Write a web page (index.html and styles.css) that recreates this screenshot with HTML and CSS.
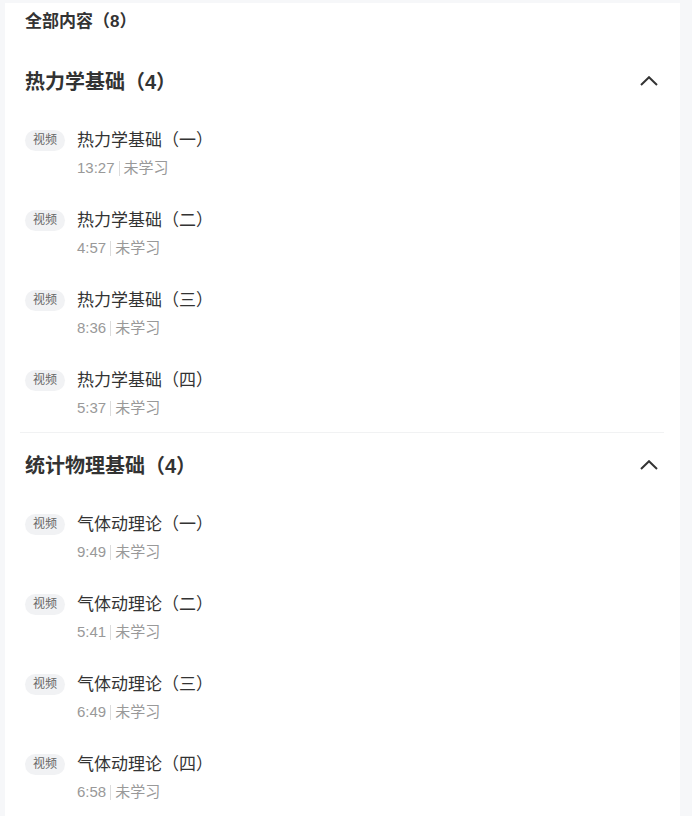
FILE: index.html
```html
<!DOCTYPE html>
<html lang="zh">
<head>
<meta charset="utf-8">
<link rel="stylesheet" href="styles.css">
</head>
<body>
<div class="card">
  <div class="all-header">全部内容（8）</div>

  <section class="section">
    <div class="sec-header">
      <span class="sec-title">热力学基础（4）</span>
      <svg class="chev" width="18" height="10" viewBox="0 0 18 10"><polyline points="1,9 9,1.2 17,9" fill="none" stroke="#333" stroke-width="2"/></svg>
    </div>
    <div class="item"><span class="tag">视频</span><div class="info"><div class="title">热力学基础（一）</div><div class="meta"><span>13:27</span><i class="sep"></i><span>未学习</span></div></div></div>
    <div class="item"><span class="tag">视频</span><div class="info"><div class="title">热力学基础（二）</div><div class="meta"><span>4:57</span><i class="sep"></i><span>未学习</span></div></div></div>
    <div class="item"><span class="tag">视频</span><div class="info"><div class="title">热力学基础（三）</div><div class="meta"><span>8:36</span><i class="sep"></i><span>未学习</span></div></div></div>
    <div class="item"><span class="tag">视频</span><div class="info"><div class="title">热力学基础（四）</div><div class="meta"><span>5:37</span><i class="sep"></i><span>未学习</span></div></div></div>
  </section>

  <section class="section divided">
    <div class="sec-header">
      <span class="sec-title">统计物理基础（4）</span>
      <svg class="chev" width="18" height="10" viewBox="0 0 18 10"><polyline points="1,9 9,1.2 17,9" fill="none" stroke="#333" stroke-width="2"/></svg>
    </div>
    <div class="item"><span class="tag">视频</span><div class="info"><div class="title">气体动理论（一）</div><div class="meta"><span>9:49</span><i class="sep"></i><span>未学习</span></div></div></div>
    <div class="item"><span class="tag">视频</span><div class="info"><div class="title">气体动理论（二）</div><div class="meta"><span>5:41</span><i class="sep"></i><span>未学习</span></div></div></div>
    <div class="item"><span class="tag">视频</span><div class="info"><div class="title">气体动理论（三）</div><div class="meta"><span>6:49</span><i class="sep"></i><span>未学习</span></div></div></div>
    <div class="item"><span class="tag">视频</span><div class="info"><div class="title">气体动理论（四）</div><div class="meta"><span>6:58</span><i class="sep"></i><span>未学习</span></div></div></div>
  </section>
</div>
</body>
</html>
```

FILE: styles.css
```css
html, body {
  margin: 0;
  padding: 0;
  background: #f6f7f9;
  font-family: "Liberation Sans", "Noto Sans CJK SC", sans-serif;
  color: #333;
}
.card {
  margin: 3px 0 0 5px;
  width: 675px;
  min-height: 813px;
  background: #fff;
  box-sizing: border-box;
  padding: 0 16px 0 15px;
}
.all-header {
  height: 46px;
  line-height: 38px;
  font-size: 17px;
  font-weight: 700;
  padding-left: 5px;
  color: #333;
}
.section {
  display: flex;
  flex-direction: column;
  gap: 6px;
  padding-left: 5px;
}
.section.divided {
  border-top: 1px solid #f1f2f3;
  margin-top: -1px;
}
.sec-header {
  height: 64px;
  box-sizing: border-box;
  padding: 0 6px 2px 0;
  display: flex;
  align-items: center;
  justify-content: space-between;
}
.sec-title {
  font-size: 20px;
  font-weight: 700;
  color: #333;
}
.chev { display: block; margin-top: 2px; }
.item {
  display: flex;
  align-items: flex-start;
  padding: 10px 0 15px;
}
.tag {
  margin-top: 1px;
  height: 21px;
  line-height: 21px;
  padding: 0 8px;
  border-radius: 11px;
  background: #f1f2f4;
  color: #666;
  font-size: 12px;
  flex: none;
}
.info {
  margin-left: 12px;
}
.title {
  font-size: 17px;
  line-height: 24px;
  color: #333;
}
.meta {
  margin-top: 5px;
  height: 20px;
  line-height: 20px;
  font-size: 15px;
  color: #999;
  display: flex;
  align-items: center;
}
.sep {
  display: block;
  width: 1px;
  height: 15px;
  background: #ddd;
  margin: 0 4px;
}
```
